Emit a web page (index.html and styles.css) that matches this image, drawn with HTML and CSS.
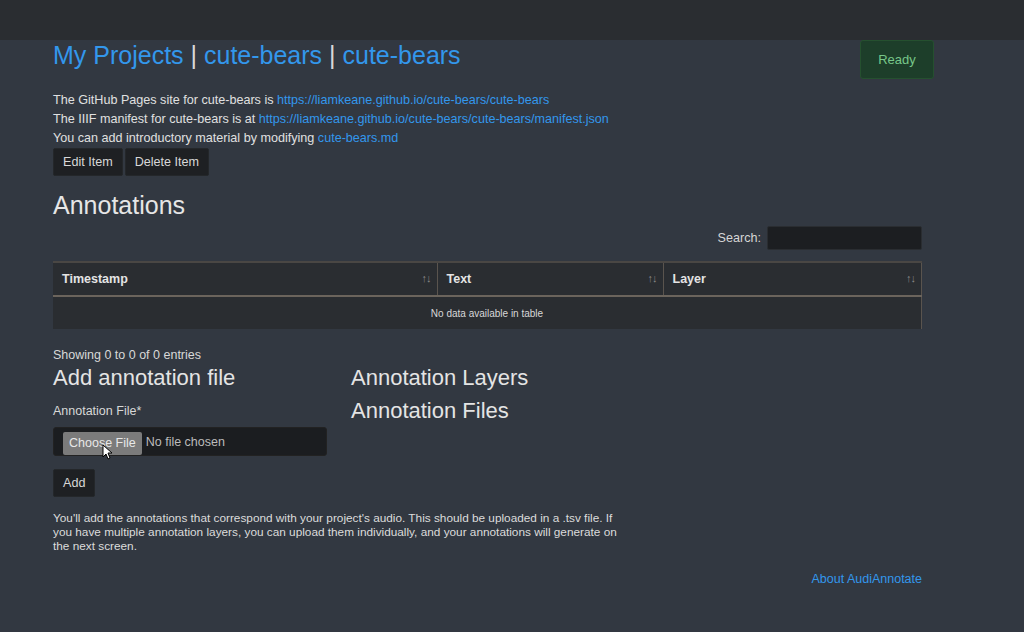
FILE: index.html
```html
<!DOCTYPE html>
<html>
<head>
<meta charset="utf-8">
<link rel="stylesheet" href="styles.css">
</head>
<body>
<div class="topbar"></div>
<main class="page">
  <div class="title-row">
    <h1 class="title"><a href="#">My Projects</a> | <a href="#">cute-bears</a> | <a href="#">cute-bears</a></h1>
    <div class="ready">Ready</div>
  </div>
  <div class="info">
    <p>The GitHub Pages site for cute-bears is <a href="#">https://liamkeane.github.io/cute-bears/cute-bears</a></p>
    <p>The IIIF manifest for cute-bears is at <a href="#">https://liamkeane.github.io/cute-bears/cute-bears/manifest.json</a></p>
    <p>You can add introductory material by modifying <a href="#">cute-bears.md</a></p>
  </div>
  <div class="actions">
    <button class="btn">Edit Item</button>
    <button class="btn">Delete Item</button>
  </div>
  <h2 class="section-title">Annotations</h2>
  <div class="search-row">
    <label class="search-label">Search:</label>
    <input class="search-input" type="text">
  </div>
  <table class="data-table">
    <thead>
      <tr>
        <th class="col-ts">Timestamp<span class="sort">↑↓</span></th>
        <th class="col-text">Text<span class="sort">↑↓</span></th>
        <th class="col-layer">Layer<span class="sort">↑↓</span></th>
      </tr>
    </thead>
    <tbody>
      <tr><td colspan="3" class="empty">No data available in table</td></tr>
    </tbody>
  </table>
  <div class="showing">Showing 0 to 0 of 0 entries</div>
  <div class="lower">
    <div class="left-col">
      <h3 class="sub-title">Add annotation file</h3>
      <div class="field-label">Annotation File*</div>
      <div class="file-input">
        <span class="choose">Choose File</span>
        <span class="nofile">No file chosen</span>
        <svg class="cursor" width="12" height="16" viewBox="0 0 12 16"><path d="M1 1 L1 13 L4 10 L6 15 L8 14 L6 9 L10 9 Z" fill="#fff" stroke="#000" stroke-width="1"/></svg>
      </div>
      <button class="btn add-btn">Add</button>
    </div>
    <div class="right-col">
      <h3 class="sub-title">Annotation Layers</h3>
      <h3 class="sub-title files">Annotation Files</h3>
    </div>
  </div>
  <p class="help">You'll add the annotations that correspond with your project's audio. This should be uploaded in a .tsv file. If you have multiple annotation layers, you can upload them individually, and your annotations will generate on the next screen.</p>
  <div class="footer"><a href="#">About AudiAnnotate</a></div>
</main>
</body>
</html>
```
FILE: styles.css
```css
* { box-sizing: border-box; }
html, body {
  margin: 0;
  padding: 0;
  background: #323841;
  font-family: "Liberation Sans", Arial, sans-serif;
  color: #dcdcdc;
}
a { color: #3397ec; text-decoration: none; }
.topbar {
  height: 40px;
  background: #2a2d31;
}
.page {
  margin-left: 53px;
  width: 869px;
  position: relative;
}
.title-row {
  display: flex;
  justify-content: space-between;
  align-items: flex-start;
  margin-right: -12px;
}
.title {
  margin: 0;
  font-weight: normal;
  font-size: 25px;
  line-height: 31px;
  color: #d8d8d8;
}
.ready {
  width: 74px;
  height: 39px;
  background: #1d3e2a;
  border: 1px solid #25502f;
  border-radius: 3px;
  color: #77c689;
  font-size: 13px;
  line-height: 37px;
  text-align: center;
}
.info { margin-top: 12px; }
.info p {
  margin: 0;
  font-size: 12.6px;
  line-height: 18.8px;
  color: #e0e0e0;
}
.actions {
  display: flex;
  gap: 2px;
  margin-top: 1px;
}
.btn {
  background: #1e2023;
  color: #d8d8d8;
  border: 1px solid #24272a;
  border-radius: 2px;
  font-family: inherit;
  font-size: 12.6px;
  height: 28px;
  padding: 0 9px;
}
.section-title {
  margin: 15px 0 0 0;
  font-weight: normal;
  font-size: 25px;
  line-height: 29px;
  color: #e6e6e6;
}
.search-row {
  display: flex;
  justify-content: flex-end;
  align-items: center;
  gap: 6px;
  margin-top: 6px;
}
.search-label { font-size: 12.6px; color: #d6d6d6; }
.search-input {
  width: 155px;
  height: 24px;
  background: #1c1e21;
  border: 1px solid #2a2d31;
  border-radius: 2px;
}
.data-table {
  margin-top: 11px;
  width: 869px;
  border-collapse: collapse;
  background: #2a2d31;
}
.data-table th {
  text-align: left;
  font-size: 12.5px;
  font-weight: bold;
  color: #e4e4e4;
  height: 34px;
  padding: 0 9px;
  border-top: 2px solid #4a4744;
  border-bottom: 2px solid #6b645c;
  position: relative;
}
.data-table th + th { border-left: 1px solid #5a544e; }
.col-layer { border-right: 1px solid #5a544e; }
.col-ts { width: 384px; }
.col-text { width: 226px; }
.sort {
  position: absolute;
  right: 6px;
  top: 9px;
  font-size: 11px;
  color: #8a8a8a;
  letter-spacing: -1px;
}
.empty {
  text-align: center;
  font-size: 10px;
  color: #d8d8d8;
  height: 33px;
  border-right: 1px solid #5a544e;
}
.showing {
  margin-top: 19px;
  font-size: 12.5px;
  color: #d8d8d8;
  line-height: 14px;
}
.lower { display: flex; }
.left-col { width: 298px; }
.sub-title {
  margin: 0;
  font-weight: normal;
  font-size: 22px;
  line-height: 31px;
  color: #e4e4e4;
}
.right-col .files { margin-top: 2px; }
.field-label {
  margin-top: 11px;
  font-size: 12.5px;
  color: #d8d8d8;
}
.file-input {
  margin-top: 9px;
  width: 274px;
  height: 29px;
  background: #1b1d20;
  border: 1px solid #222;
  border-radius: 3px;
  display: flex;
  align-items: center;
  position: relative;
  padding-left: 9px;
}
.choose {
  background: #7b7b7b;
  color: #e8e8e8;
  font-size: 12.5px;
  height: 23px;
  line-height: 23px;
  padding: 0 6px;
  border-radius: 2px;
  margin-top: 4px;
}
.nofile {
  margin-left: 4px;
  font-size: 12.5px;
  color: #bbb;
}
.cursor {
  position: absolute;
  left: 48px;
  top: 16px;
}
.add-btn {
  margin-top: 13px;
  height: 28px;
  padding: 0 9px;
}
.help {
  margin: 14px 0 0 0;
  width: 568px;
  font-size: 11.8px;
  line-height: 14px;
  color: #dcdcdc;
}
.footer {
  text-align: right;
  margin-top: 19px;
  font-size: 12.5px;
}
```
